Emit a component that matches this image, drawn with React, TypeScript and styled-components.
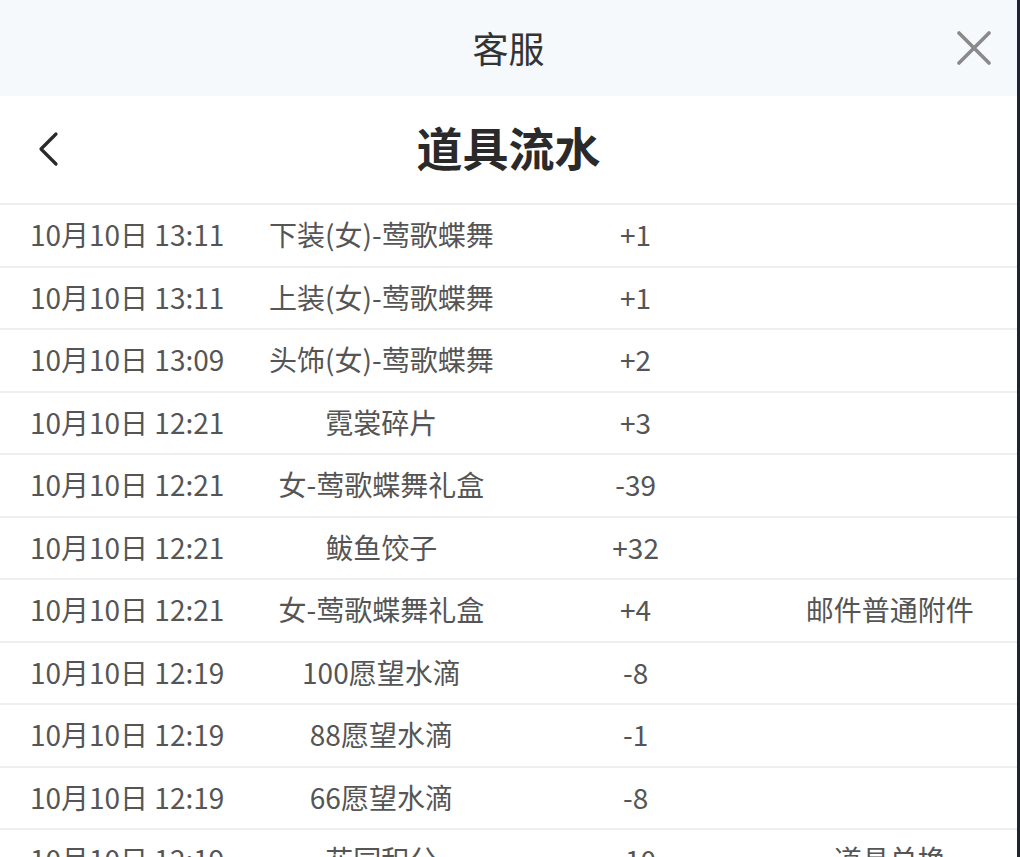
import React from "react";
import styled, { createGlobalStyle } from "styled-components";

const Global = createGlobalStyle`
  html, body { margin: 0; padding: 0; background: #1c2633; overflow: hidden; }
  body { font-family: "Noto Sans CJK SC", "Noto Sans", sans-serif; }
`;

const Panel = styled.div`
  width: 1017px;
  height: 857px;
  background: #ffffff;
  display: flex;
  flex-direction: column;
  overflow: hidden;
`;

const Header = styled.div`
  height: 96px;
  background: #f6f9fc;
  display: flex;
  align-items: center;
  justify-content: center;
  position: relative;
  flex-shrink: 0;
`;

const HeaderTitle = styled.div`
  font-size: 36px;
  color: #333333;
  line-height: 1;
  margin-top: -3px;
`;

const CloseBtn = styled.div`
  position: absolute;
  right: 26px;
  top: 31px;
  width: 34px;
  height: 34px;
  display: flex;
`;

const TitleRow = styled.div`
  height: 107px;
  display: flex;
  align-items: center;
  justify-content: center;
  position: relative;
  flex-shrink: 0;
  border-bottom: 2px solid #eeeeee;
`;

const PageTitle = styled.div`
  font-size: 46px;
  font-weight: 700;
  color: #2a2a2a;
  line-height: 1;
  margin-top: -8px;
`;

const BackBtn = styled.div`
  position: absolute;
  left: 36px;
  top: 35px;
  width: 26px;
  height: 36px;
  display: flex;
`;

const Row = styled.div`
  height: 60.5px;
  flex-shrink: 0;
  display: grid;
  grid-template-columns: repeat(4, 1fr);
  align-items: center;
  border-bottom: 2px solid #eeeeee;
`;

const Cell = styled.div`
  text-align: center;
  font-size: 28px;
  color: #555555;
  white-space: nowrap;
  line-height: 1;
  margin-top: -2px;
`;

const rows: [string, string, string, string][] = [
  ["10月10日 13:11", "下装(女)-莺歌蝶舞", "+1", ""],
  ["10月10日 13:11", "上装(女)-莺歌蝶舞", "+1", ""],
  ["10月10日 13:09", "头饰(女)-莺歌蝶舞", "+2", ""],
  ["10月10日 12:21", "霓裳碎片", "+3", ""],
  ["10月10日 12:21", "女-莺歌蝶舞礼盒", "-39", ""],
  ["10月10日 12:21", "鲅鱼饺子", "+32", ""],
  ["10月10日 12:21", "女-莺歌蝶舞礼盒", "+4", "邮件普通附件"],
  ["10月10日 12:19", "100愿望水滴", "-8", ""],
  ["10月10日 12:19", "88愿望水滴", "-1", ""],
  ["10月10日 12:19", "66愿望水滴", "-8", ""],
  ["10月10日 12:19", "花园积分", "-10", "道具兑换"],
];

export default function App() {
  return (
    <>
      <Global />
      <Panel>
        <Header>
          <HeaderTitle>客服</HeaderTitle>
          <CloseBtn>
            <svg width="34" height="34" viewBox="0 0 34 34">
              <path d="M2 2 L32 32 M32 2 L2 32" stroke="#8a8a8a" strokeWidth="3.6" strokeLinecap="round" />
            </svg>
          </CloseBtn>
        </Header>
        <TitleRow>
          <BackBtn>
            <svg width="26" height="36" viewBox="0 0 26 36">
              <path d="M20 3 L5 18 L20 33" stroke="#2a2a2a" strokeWidth="3.2" fill="none" strokeLinecap="round" strokeLinejoin="round" />
            </svg>
          </BackBtn>
          <PageTitle>道具流水</PageTitle>
        </TitleRow>
        {rows.map((r, i) => (
          <Row key={i}>
            {r.map((c, j) => (
              <Cell key={j}>{c}</Cell>
            ))}
          </Row>
        ))}
      </Panel>
    </>
  );
}
